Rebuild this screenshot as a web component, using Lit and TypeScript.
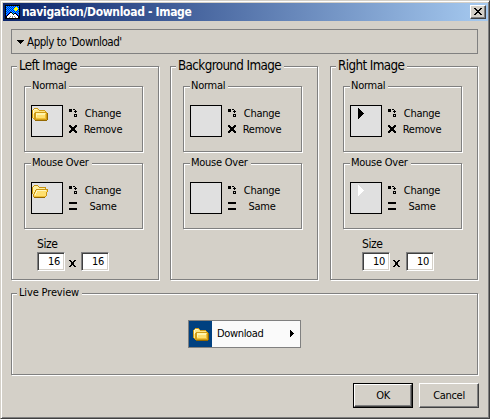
import { LitElement, html, css, svg } from "lit";
import { customElement, property } from "lit/decorators.js";

const folderClosed = svg`<svg class="folder" width="16" height="13" viewBox="0 0 16 13" shape-rendering="crispEdges">
  <path fill="#d09c18" d="M2 0h4v1h1v1h6v1h1v1h1v1h1v7h-1v1H3v-1H2v-1H1v-1H0V2h1V1h1z"/>
  <path fill="#ffe684" d="M2 1h4v1h1v1h6v1H3v1H2v5H1V2h1z"/>
  <path fill="#fffad0" d="M2 1h3v1H2zM1 2h1v4H1z"/>
  <path fill="#ffe070" d="M4 5h10v6H4z"/><path fill="#fff4ac" d="M4 5h9v2H5v2H4z"/>
  <path fill="#f0c038" d="M4 10h10v1H4zM13 6h1v4h-1z"/><path fill="#946800" d="M3 12h12v1H3zM15 5h1v7h-1z"/></svg>`;
const folderOpen = svg`<svg class="folder" width="16" height="13" viewBox="0 0 16 13" shape-rendering="crispEdges">
  <path fill="#c89410" d="M2 0h4v1h1v1h7v2h2v3h-1v4h-1v1h-1v1H2v-1H1V9H0V2h1V1h1z"/>
  <path fill="#fff0a0" d="M2 1h4v1h1v1h6v1H4v1H3v2H2v2H1V2h1z"/>
  <path fill="#ffe070" d="M5 5h10v2h-1v4h-1v1H2V9h1V7h1V5z"/>
  <path fill="#fff8c4" d="M5 5h9v1H5v2H4v2H3V8h1V6h1z"/>
  <path fill="#f0c038" d="M2 11h11v1H2z"/><path fill="#946800" d="M2 12h11v1H2z"/></svg>`;
const arrow = svg`<svg class="arrow" width="6" height="11" viewBox="0 0 6 11" shape-rendering="crispEdges"><path fill="currentColor" d="M0 0h1v1h1v1h1v1h1v1h1v1h1v1H5v1H4v1H3v1H2v1H1v1H0z"/></svg>`;
const changeIcon = svg`<svg width="9" height="8" viewBox="0 0 9 8" shape-rendering="crispEdges"><path d="M0 0h3v3H0zM4 0h2v1H4zM6 1h1v3H6zM5 2h3v1H5zM5 5h3v3H5z"/><path fill="#d4d0c8" d="M6 6h1v1H6z"/></svg>`;
const removeIcon = svg`<svg width="9" height="8" viewBox="0 0 9 8" shape-rendering="crispEdges"><path d="M0 0h2v1h1v1h2V1h1V0h2v2H7v1H6v2h1v1h1v2H6V7H5V6H3v1H2v1H0V6h1V5h1V3H1V2H0z"/></svg>`;
const sameIcon = svg`<svg width="9" height="8" viewBox="0 0 9 8" shape-rendering="crispEdges"><path d="M0 0h8v2H0zM0 6h8v2H0z"/></svg>`;
const timesIcon = svg`<svg class="times" width="7" height="7" viewBox="0 0 7 7" shape-rendering="crispEdges"><path d="M0 0h2v1h1v1h1V1h1V0h2v1H6v1H5v3h1v1h1v1H5V6H4V5H3v1H2v1H0V6h1V5h1V2H1V1H0z"/></svg>`;
const appIcon = svg`<svg class="app" width="15" height="14" viewBox="0 0 15 14" shape-rendering="crispEdges">
  <defs><pattern id="sky" width="2" height="2" patternUnits="userSpaceOnUse"><path fill="#0000ff" d="M0 0h2v2H0z"/><path fill="#00d8ff" d="M0 0h1v1H0zM1 1h1v1H1z"/></pattern></defs>
  <path d="M0 0h15v14H0z"/><path fill="url(#sky)" d="M1 1h13v12H1z"/>
  <path fill="#ff0" d="M9 3h4v2H9zM10 2h2v4h-2z"/>
  <path d="M1 11h1v-1h1V9h1V8h1V7h2v1h1v1h1V8h2v1h1v1h1v1h1v2H1z"/>
  <path fill="#fff" d="M2 11h1v-1h1V9h1V8h2v1h1v1h1V9h2v1h1v1h1v2H2z"/>
  <path fill="#909090" d="M5 11h1v1H5zM7 11h1v2H7zM4 12h1v1H4zM10 12h1v1h-1zM9 11h1v1H9z"/></svg>`;

const etched = css`
  .group { box-sizing: border-box; border: 1px solid #808080; box-shadow: 1px 1px #fff, inset 1px 1px #fff; }
  .legend { display: block; width: max-content; height: 14px; line-height: 14px; margin-top: -8px; background: #d4d0c8; white-space: nowrap; }
`;

@customElement("image-state")
class ImageState extends LitElement {
  @property() caption = "";
  @property() picture = "";
  @property() action = "";
  static styles = [etched, css`
    :host { display: block; }
    .group { width: 119px; height: 66px; padding-left: 6px; }
    .legend { padding: 0 3px 0 1px; letter-spacing: -0.25px; }
    .body { display: flex; margin-top: 12px; }
    .swatch { box-sizing: border-box; width: 32px; height: 32px; border: 1px solid #000; background: #e0e0e0; }
    .folder { display: block; margin: 2px 0 0 0; }
    .arrow { display: block; margin: 2px 0 0 7px; }
    .white { color: #fff; }
    .actions { display: grid; grid-template-columns: 9px 46px; grid-auto-rows: 16px; margin-left: 5px; column-gap: 3px; margin-top: 1px; }
    .actions svg { margin: 3px 0 0 1px; }
    .actions span { line-height: 15px; text-align: center; letter-spacing: -0.25px; }
  `];
  render() {
    const art = this.picture === "closed" ? folderClosed
      : this.picture === "open" ? folderOpen
      : this.picture ? html`<span class=${this.picture}>${arrow}</span>` : "";
    return html`<div class="group"><span class="legend">${this.caption}</span>
      <div class="body"><div class="swatch">${art}</div>
        <div class="actions">${changeIcon}<span>Change</span>
        ${this.action === "Same" ? sameIcon : removeIcon}<span>${this.action}</span></div>
      </div></div>`;
  }
}

@customElement("image-column")
class ImageColumn extends LitElement {
  @property() caption = "";
  @property() normal = "";
  @property() over = "";
  @property() size = "";
  @property({ type: Number }) indent = 26;
  static styles = [etched, css`
    :host { display: block; }
    .group { width: 148px; height: 214px; padding-left: 12px; }
    .title { font-size: 13.3px; height: 16px; line-height: 16px; margin: -9px 0 0 -7px; padding: 0 3px 0 2px; letter-spacing: -0.6px; }
    image-state { margin-top: 12px; height: 66px; }
    image-state + image-state { margin-top: 11px; }
    .size { font-size: 12px; line-height: 16px; margin-top: 7px; letter-spacing: -0.4px; }
    .fields { display: flex; }
    .field { box-sizing: border-box; width: 28px; height: 19px; border: 1px solid; border-color: #808080 #fff #fff #808080; box-shadow: inset 1px 1px #404040, inset -1px -1px #d4d0c8; background: #fff; text-align: right; padding-right: 4px; line-height: 18px; letter-spacing: -0.3px; }
    .times { margin: 8px 5px 0 4px; }
    .sizes { width: max-content; }
    .left { margin-left: 13px; }
    .right { margin-left: 19px; }
    .right .times { margin: 8px 6px 0 3px; }
  `];
  render() {
    return html`<div class="group"><span class="legend title">${this.caption}</span>
      <image-state caption="Normal" picture=${this.normal} action="Remove"></image-state>
      <image-state caption="Mouse Over" picture=${this.over} action="Same"></image-state>
      ${this.size ? html`<div class="sizes ${this.indent > 26 ? "right" : "left"}"><div class="size">Size</div>
        <div class="fields"><div class="field">${this.size}</div>${timesIcon}<div class="field">${this.size}</div></div></div>` : ""}
    </div>`;
  }
}

@customElement("app-root")
class AppRoot extends LitElement {
  static styles = [etched, css`
    :host { display: block; width: 490px; height: 419px; font-family: "DejaVu Sans Condensed", "DejaVu Sans", sans-serif; font-stretch: condensed; font-size: 11px; color: #000; }
    .window { box-sizing: border-box; height: 419px; background: #d4d0c8; border: 1px solid; border-color: #d4d0c8 #404040 #404040 #d4d0c8; box-shadow: inset 1px 1px #fff, inset -1px -1px #808080; padding: 2px; }
    .bar { display: flex; height: 18px; background: linear-gradient(90deg, #0a246a, #a6caf0); box-sizing: border-box; padding: 2px 2px 0; margin-right: -1px; }
    .name { color: #fff; font-weight: bold; font-size: 12px; line-height: 14px; margin-left: 2px; flex: 1; letter-spacing: -0.33px; }
    .close { box-sizing: border-box; width: 16px; height: 14px; padding: 2px 0 0 3px; }
    .close svg { display: block; }
    .raised { background: #d4d0c8; border: 1px solid; border-color: #fff #404040 #404040 #fff; box-shadow: inset -1px -1px #808080; box-sizing: border-box; }
    .content { padding: 8px 7px 0 8px; }
    .apply { box-sizing: border-box; width: 467px; height: 25px; border: 1px solid #808080; font-size: 11.5px; letter-spacing: -0.45px; line-height: 24px; padding-left: 5px; display: flex; }
    .apply svg { margin: 10px 3px 0 0; }
    .columns { display: flex; margin-top: 12px; }
    .columns image-column { width: 148px; height: 214px; margin-right: 11px; }
    .columns image-column + image-column { margin-right: 12px; }
    .live { width: 467px; height: 82px; margin-top: 13px; padding-left: 5px; }
    .live .legend { padding: 0 3px 0 2px; letter-spacing: -0.15px; }
    .item { box-sizing: border-box; width: 113px; height: 28px; border: 1px solid #808080; background: #fafafa; display: flex; margin: 20px 0 0 171px; }
    .tile { width: 23px; background: #004080; }
    .tile svg { display: block; margin: 7px 0 0 4px; }
    .item span { margin-left: 5px; width: 73px; line-height: 26px; letter-spacing: -0.35px; }
    .item > svg { margin-top: 9px; }
    .buttons { display: flex; justify-content: flex-end; gap: 6px; margin: 8px 1px 0 0; }
    .button { width: 60px; height: 25px; text-align: center; line-height: 23px; letter-spacing: -0.3px; }
    .default { background: #000; padding: 1px; box-sizing: border-box; }
    .default .button { width: 58px; height: 23px; line-height: 21px; }
  `];
  render() {
    return html`<div class="window">
      <div class="bar">${appIcon}<span class="name">navigation/Download - Image</span>
        <div class="close raised"><svg width="8" height="7" viewBox="0 0 8 7" shape-rendering="crispEdges"><path d="M0 0h2v1h1v1h2V1h1V0h2v1H7v1H6v1H5v1h1v1h1v1h1v1H6V6H5V5H3v1H2v1H0V6h1V5h1V4h1V3H2V2H1V1H0z"/></svg></div></div>
      <div class="content">
        <div class="apply"><svg width="7" height="4" viewBox="0 0 7 4" shape-rendering="crispEdges"><path d="M0 0h7v1H6v1H5v1H4v1H3V3H2V2H1V1H0z"/></svg><span>Apply to 'Download'</span></div>
        <div class="columns">
          <image-column caption="Left Image" normal="closed" over="open" size="16"></image-column>
          <image-column caption="Background Image"></image-column>
          <image-column caption="Right Image" normal="black" over="white" size="10" indent="32"></image-column>
        </div>
        <div class="group live"><span class="legend">Live Preview</span>
          <div class="item"><div class="tile">${folderClosed}</div><span>Download</span>
            <svg width="4" height="7" viewBox="0 0 4 7" shape-rendering="crispEdges"><path d="M0 0h1v1h1v1h1v1h1v1H3v1H2v1H1v1H0z"/></svg></div></div>
        <div class="buttons"><div class="default"><div class="button raised">OK</div></div><div class="button raised">Cancel</div></div>
      </div></div>`;
  }
}
